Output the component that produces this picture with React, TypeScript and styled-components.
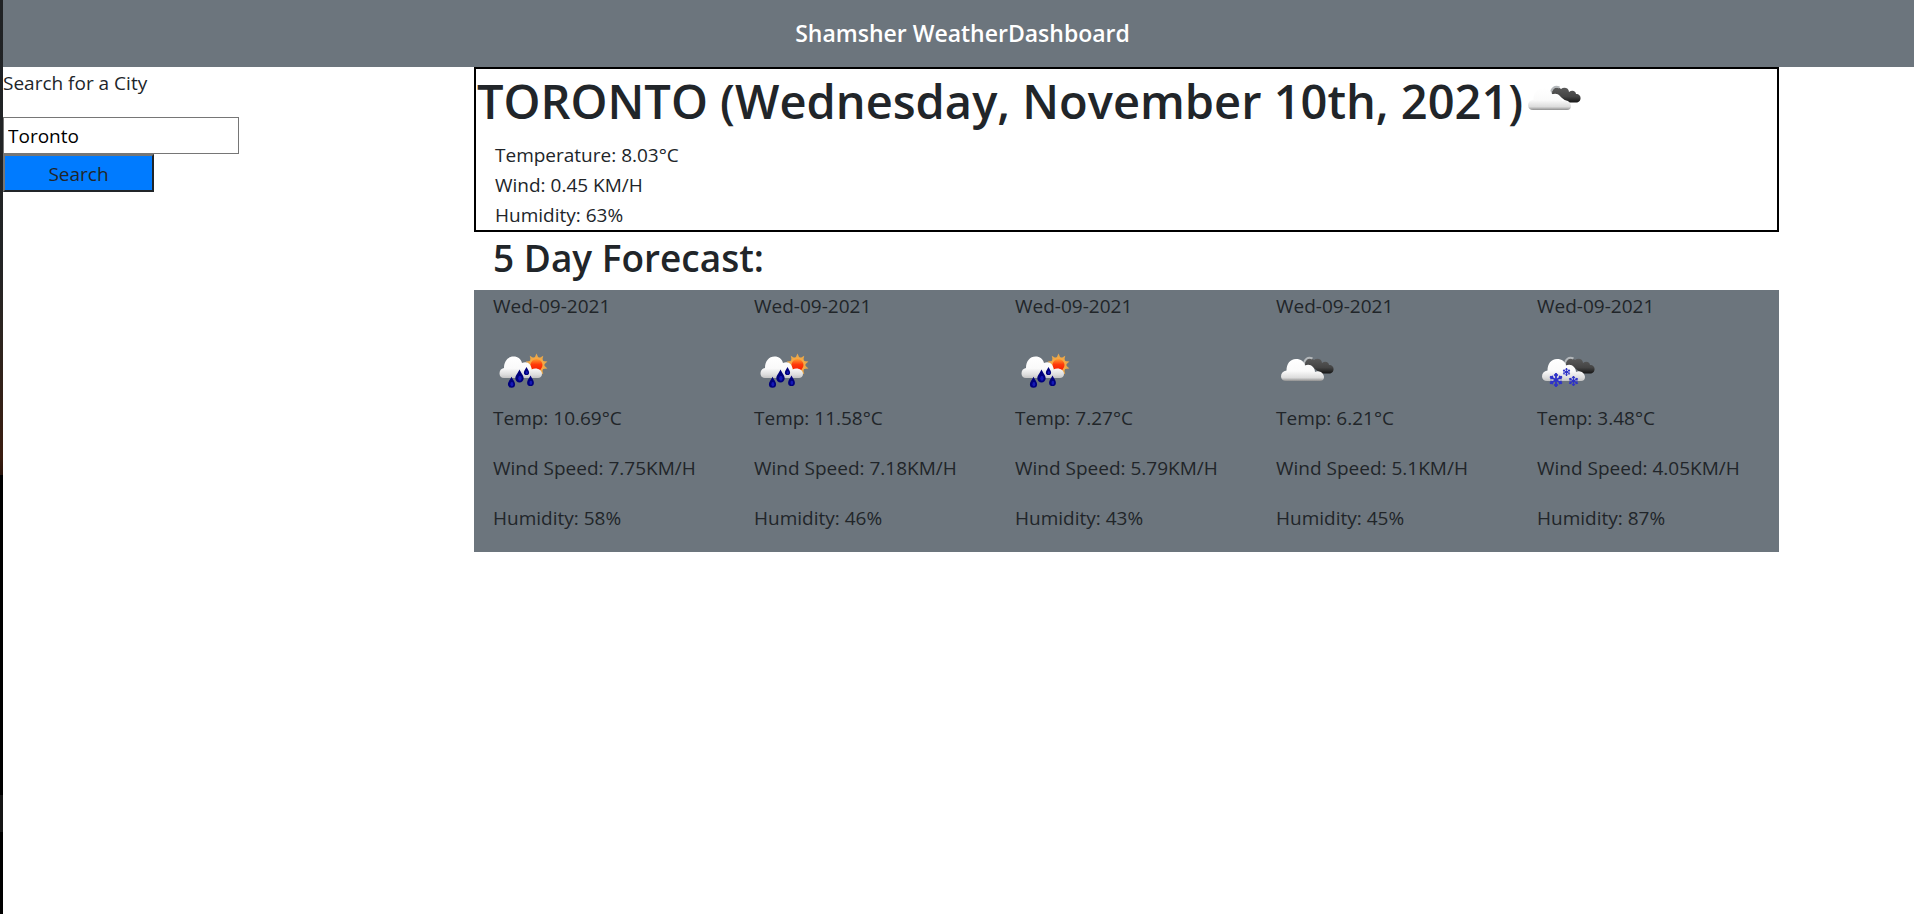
import React, { useState } from "react";
import styled, { createGlobalStyle } from "styled-components";

const GlobalStyle = createGlobalStyle`
  *, *::before, *::after { box-sizing: border-box; }
  body {
    margin: 0;
    background: #fff;
    color: #212529;
    font-family: "Segoe UI", "Open Sans", "Noto Sans", sans-serif;
    font-size: 19px;
    line-height: 30px;
  }
  h1, h2, p { margin: 0; }
`;

const Shell = styled.div`
  display: flex;
  min-height: 100vh;
`;

const EdgeStrip = styled.div`
  flex: 0 0 3px;
  background: linear-gradient(
    #202224 0%, #222426 28%, #2c2520 36%, #3a1d10 50%, #2a140c 52%,
    #000 52%, #000 87%, #161616 87%, #161616 91%, #000 91%
  );
`;

const Page = styled.div`
  flex: 1;
  min-width: 0;
`;

const Header = styled.header`
  padding: 18px 0 19px 8px;
  background: #6c757d;
  color: #fff;
  text-align: center;
`;

const Brand = styled.h1`
  font-size: 23px;
  font-weight: 600;
  line-height: 30px;
`;

const Columns = styled.div`
  display: grid;
  grid-template-columns: 471fr 1305fr 135fr;
  align-items: start;
`;

const SearchForm = styled.form`
  display: flex;
  flex-direction: column;
  align-items: flex-start;
  padding-top: 1px;
`;

const SearchLabel = styled.label`
  margin-bottom: 19px;
`;

const SearchInput = styled.input`
  width: 236px;
  height: 37px;
  padding: 1px 4px;
  border: 1px solid #767676;
  border-radius: 0;
  background: #fff;
  color: #000;
  font: inherit;
`;

const SearchButton = styled.button`
  width: 151px;
  height: 38px;
  padding: 1px 0 0;
  border: 2px solid;
  border-color: #767676 #212529 #212529 #767676;
  background: #007bff;
  color: #212529;
  font: inherit;
`;

const Current = styled.section`
  border: 2px solid #000;
`;

const CurrentTitle = styled.h1`
  display: flex;
  align-items: center;
  margin-bottom: 8px;
  padding: 1px 0 0 1px;
  font-size: 47px;
  font-weight: 600;
  line-height: 62px;
  white-space: nowrap;
`;

const Reading = styled.p`
  padding-left: 19px;
`;

const ForecastTitle = styled.h2`
  padding: 2px 19px 8px;
  font-size: 37px;
  font-weight: 600;
  line-height: 48px;
`;

const ForecastGrid = styled.section`
  display: grid;
  grid-template-columns: repeat(5, 1fr);
  background: #6c757d;
`;

const Day = styled.article`
  padding: 1px 19px 19px;
  white-space: nowrap;
`;

const DayLine = styled.p<{ $spaced?: boolean }>`
  margin-top: ${(p) => (p.$spaced ? "20px" : "0")};
`;

const IconFrame = styled.svg`
  display: block;
  flex: none;
  width: 62px;
  height: 62px;
`;

const DayIcon = styled.div`
  margin-top: 20px;
`;

type Kind = "rain" | "clouds" | "snow";

const CLOUD =
  "M10 40C7 40 5 38 5 35.500C5 32 7 30 10.500 29.500C10.500 23 14 18 20 18C25 18 28 20.500 29 24.500C34 22 39 26 39 31C43 28.500 48 32 48 36C48 38.500 46.500 40 44 40Z";
const DARK = "M29 24C28 19 34 15 38 19C41 16.500 46 18 46 22C49 19.500 53 21 53 24C56 24 58 26 57.500 29C57 32 54 33 51 32.500L45 32.500C41 30 39 27 35 26Z";

const Drop = ({ x, y, r }: { x: number; y: number; r: number }) => (
  <g>
    <path
      d={`M${x} ${y - r * 1.9}C${x + r * 0.4} ${y - r} ${x + r} ${y - r * 0.5} ${x + r} ${y + r * 0.2}A${r} ${r} 0 0 1 ${x - r} ${y + r * 0.2}C${x - r} ${y - r * 0.5} ${x - r * 0.4} ${y - r} ${x} ${y - r * 1.9}Z`}
      fill="#00007c"
    />
    <ellipse cx={x + r * 0.1} cy={y + r * 0.2} rx={r * 0.4} ry={r * 0.6} fill="#1518b8" />
  </g>
);

const Flake = ({ x, y, r }: { x: number; y: number; r: number }) => (
  <g stroke="#2e32c8" strokeWidth={r * 0.26} fill="none">
    {[0, 60, 120, 180, 240, 300].map((a) => (
      <path
        key={a}
        transform={`rotate(${a} ${x} ${y})`}
        d={`M${x} ${y}V${y - r}M${x - r * 0.25} ${y - r * 0.8}L${x} ${y - r * 0.55}L${x + r * 0.25} ${y - r * 0.8}`}
      />
    ))}
  </g>
);

const WeatherIcon = ({ kind, id }: { kind: Kind; id: string }) => (
  <IconFrame viewBox="0 0 62 62" role="img" aria-label={kind}>
    <defs>
      <linearGradient id={`${id}-w`} x1="0" y1="0" x2="0" y2="1">
        <stop offset="0" stopColor="#fff" />
        <stop offset="0.55" stopColor="#fafafa" />
        <stop offset="0.85" stopColor="#dcdcdc" />
        <stop offset="1" stopColor={kind === "clouds" ? "#8f8f8f" : "#c4c4c4"} />
      </linearGradient>
      <linearGradient id={`${id}-d`} x1="0" y1="0" x2="0" y2="1">
        <stop offset="0" stopColor="#5a5a5a" />
        <stop offset="0.6" stopColor="#444" />
        <stop offset="1" stopColor="#151515" />
      </linearGradient>
      <linearGradient id={`${id}-s`} x1="0" y1="0" x2="0" y2="1">
        <stop offset="0" stopColor="#ff9a2e" />
        <stop offset="0.45" stopColor="#ff3b0a" />
        <stop offset="1" stopColor="#f31900" />
      </linearGradient>
    </defs>
    {kind === "rain" ? (
      <>
        {[0, 36, 72, 108, 144, 180, 216, 252, 288, 324].map((a) => (
          <path key={a} d="M41.500 17L43.500 12.500L45.500 17Z" fill="#e9a84a" transform={`rotate(${a} 43.500 24)`} />
        ))}
        <circle cx="43.500" cy="24" r="8" fill="#f5a845" />
        <circle cx="43.500" cy="24" r="6" fill={`url(#${id}-s)`} />
        <path
          d="M11 37C8 37 6.500 35 6.500 32.500C6.500 29.500 8 27.500 11 27C11 20 15 15.500 20.500 15.500C25 15.500 28 18 29 22C34 19.500 38.500 23 38.500 28.500C43 26 49 28.500 49 33C49 35.500 47 37 45 37Z"
          fill={`url(#${id}-w)`}
        />
        <Drop x={18.5} y={42.5} r={3.6} />
        <Drop x={26.5} y={36.5} r={4.2} />
        <Drop x={33.5} y={31} r={2.6} />
        <Drop x={37.5} y={41} r={3.4} />
      </>
    ) : (
      <>
        <path d={DARK} fill={`url(#${id}-d)`} />
        <path d="M28 24C28 18 32 15.500 36.500 17.500" fill="none" stroke="#b4b8bb" strokeWidth="2" />
        <path d={CLOUD} fill={`url(#${id}-w)`} />
        {kind === "snow" && (
          <>
            <Flake x={19} y={39} r={7} />
            <Flake x={29.5} y={31} r={4} />
            <Flake x={36.5} y={40} r={5} />
          </>
        )}
      </>
    )}
  </IconFrame>
);

const DAYS: { kind: Kind; temp: string; wind: string; humidity: string }[] = [
  { kind: "rain", temp: "10.69", wind: "7.75", humidity: "58" },
  { kind: "rain", temp: "11.58", wind: "7.18", humidity: "46" },
  { kind: "rain", temp: "7.27", wind: "5.79", humidity: "43" },
  { kind: "clouds", temp: "6.21", wind: "5.1", humidity: "45" },
  { kind: "snow", temp: "3.48", wind: "4.05", humidity: "87" },
];

export default function App() {
  const [city, setCity] = useState("Toronto");

  return (
    <>
      <GlobalStyle />
      <Shell>
        <EdgeStrip />
        <Page>
          <Header>
            <Brand>Shamsher WeatherDashboard</Brand>
          </Header>
          <Columns>
            <SearchForm onSubmit={(e) => e.preventDefault()}>
              <SearchLabel htmlFor="city">Search for a City</SearchLabel>
              <SearchInput id="city" type="text" value={city} onChange={(e) => setCity(e.target.value)} />
              <SearchButton type="submit">Search</SearchButton>
            </SearchForm>
            <main>
              <Current>
                <CurrentTitle>
                  <span>TORONTO (Wednesday, November 10th, 2021)</span>
                  <WeatherIcon kind="clouds" id="now" />
                </CurrentTitle>
                <Reading>Temperature: 8.03°C</Reading>
                <Reading>Wind: 0.45 KM/H</Reading>
                <Reading>Humidity: 63%</Reading>
              </Current>
              <ForecastTitle>5 Day Forecast:</ForecastTitle>
              <ForecastGrid>
                {DAYS.map((d, i) => (
                  <Day key={i}>
                    <DayLine>Wed-09-2021</DayLine>
                    <DayIcon>
                      <WeatherIcon kind={d.kind} id={`day${i}`} />
                    </DayIcon>
                    <DayLine>Temp: {d.temp}°C</DayLine>
                    <DayLine $spaced>Wind Speed: {d.wind}KM/H</DayLine>
                    <DayLine $spaced>Humidity: {d.humidity}%</DayLine>
                  </Day>
                ))}
              </ForecastGrid>
            </main>
          </Columns>
        </Page>
      </Shell>
    </>
  );
}
